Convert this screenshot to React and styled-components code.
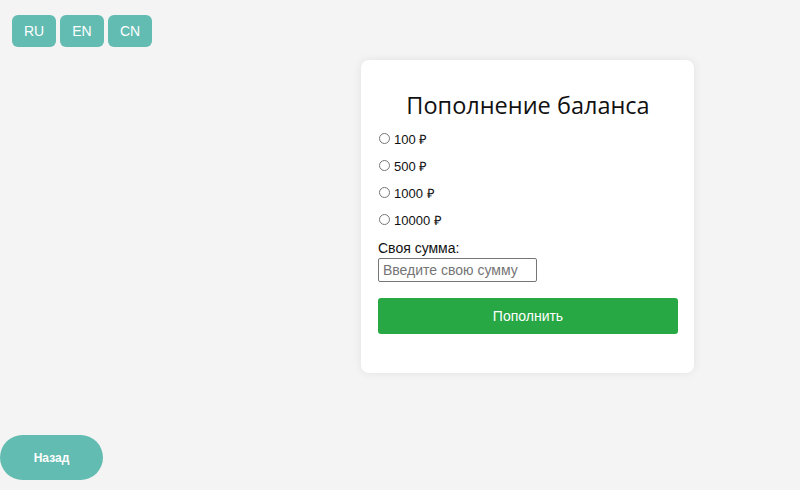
import styled, { createGlobalStyle } from "styled-components"

const Global = createGlobalStyle`
  html, body {
    margin: 0;
    padding: 0;
    background: #f4f4f4;
    font-family: "Liberation Sans", Arial, sans-serif;
  }
`

const amounts = [100, 500, 1000, 10000]

const App = () => {
    return (
        <Page>
            <Global />
            <LangBar>
                <LangButton>RU</LangButton>
                <LangButton>EN</LangButton>
                <LangButton>CN</LangButton>
            </LangBar>
            <Card>
                <Title>Пополнение баланса</Title>
                {amounts.map((a) => (
                    <Option key={a}>
                        <input type="radio" name="amount" />
                        <span>{a} ₽</span>
                    </Option>
                ))}
                <CustomLabel>Своя сумма:</CustomLabel>
                <AmountInput type="text" placeholder="Введите свою сумму" />
                <Submit>Пополнить</Submit>
            </Card>
            <BackButton>Назад</BackButton>
        </Page>
    )
}

const Page = styled.div`
    display: flex;
    flex-direction: column;
    height: 490px;
    box-sizing: border-box;
    padding-bottom: 10px;
`

const LangBar = styled.div`
    display: flex;
    gap: 4px;
    padding: 15px 12px 0;
`

const LangButton = styled.button`
    width: 44px;
    height: 32px;
    border: none;
    border-radius: 6px;
    background: #63bcb2;
    color: #fff;
    font-family: "Liberation Sans", Arial, sans-serif;
    font-size: 14px;
    padding: 0;
`

const Card = styled.div`
    align-self: flex-start;
    margin: 13px 0 0 361px;
    width: 333px;
    height: 313px;
    box-sizing: border-box;
    padding: 28px 16px 0 17px;
    background: #fff;
    border-radius: 8px;
    box-shadow: 0 0 8px rgba(0, 0, 0, 0.08);
    display: flex;
    flex-direction: column;
`

const Title = styled.h2`
    margin: 0 0 7px;
    text-align: center;
    font-family: "Open Sans", "Noto Sans", sans-serif;
    font-weight: 400;
    font-size: 23.5px;
    line-height: 35px;
    color: #111;
`

const Option = styled.label`
    display: flex;
    align-items: center;
    height: 17px;
    margin-bottom: 10px;
    font-size: 13px;
    color: #111;
    input {
        margin: 0 4px 0 1px;
        width: 11px;
        height: 11px;
    }
`

const CustomLabel = styled.div`
    font-size: 14px;
    color: #111;
    margin-top: 2px;
    line-height: 16px;
`

const AmountInput = styled.input`
    width: 159px;
    height: 24px;
    box-sizing: border-box;
    margin-top: 2px;
    padding: 2px 4px;
    border: 1px solid #767676;
    border-radius: 2px;
    font-family: "Liberation Sans", Arial, sans-serif;
    font-size: 14px;
    &::placeholder {
        color: #757575;
    }
`

const Submit = styled.button`
    margin-top: 16px;
    height: 36px;
    border: none;
    border-radius: 3px;
    background: #28a745;
    color: #fff;
    font-family: "Liberation Sans", Arial, sans-serif;
    font-size: 14px;
`

const BackButton = styled.button`
    margin-top: auto;
    align-self: flex-start;
    width: 103px;
    height: 45px;
    border: none;
    border-radius: 23px;
    background: #63bcb2;
    color: #fff;
    font-family: "Liberation Sans", Arial, sans-serif;
    font-size: 12px;
    font-weight: 700;
`

export default App
